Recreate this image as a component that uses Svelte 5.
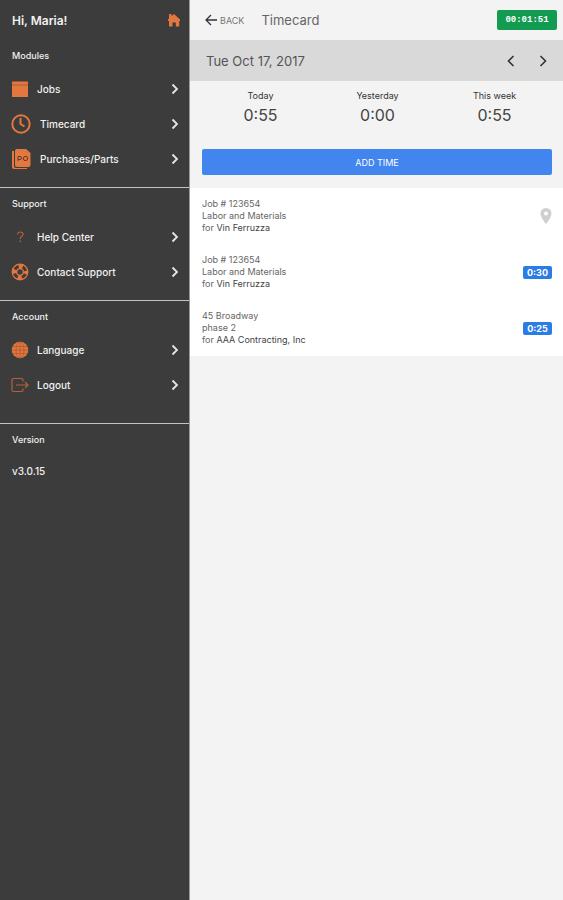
<script lang="ts">
  interface MenuItem {
    label: string;
    icon: string;
    wide?: boolean;
  }

  interface Section {
    title: string;
    items: MenuItem[];
  }

  const sections: Section[] = [
    {
      title: 'Modules',
      items: [
        { label: 'Jobs', icon: 'jobs' },
        { label: 'Timecard', icon: 'clock', wide: true },
        { label: 'Purchases/Parts', icon: 'po', wide: true },
      ],
    },
    {
      title: 'Support',
      items: [
        { label: 'Help Center', icon: 'help' },
        { label: 'Contact Support', icon: 'support' },
      ],
    },
    {
      title: 'Account',
      items: [
        { label: 'Language', icon: 'globe' },
        { label: 'Logout', icon: 'logout' },
      ],
    },
  ];

  const totals = [
    { label: 'Today', value: '0:55' },
    { label: 'Yesterday', value: '0:00' },
    { label: 'This week', value: '0:55' },
  ];

  const entries = [
    { job: 'Job # 123654', task: 'Labor and Materials', customer: 'Vin Ferruzza', time: '' },
    { job: 'Job # 123654', task: 'Labor and Materials', customer: 'Vin Ferruzza', time: '0:30' },
    { job: '45 Broadway', task: 'phase 2', customer: 'AAA Contracting, Inc', time: '0:25' },
  ];
</script>

<div class="app">
  <nav class="sidebar">
    <div class="greeting">
      <span>Hi, Maria!</span>
      <a class="home" href="#home" aria-label="Home">
        <svg width="14" height="14" viewBox="0 0 14 14" fill="#e27740">
          <path d="M2 1h2.500v2.200L7 1l6 5.500V8h-.8v5.500H8.800V9.500H5.500v4H2V8H1V6.500l1-1z" />
        </svg>
      </a>
    </div>

    {#each sections as section}
      <section class="section" class:last={section.title === 'Account'}>
        <h2>{section.title}</h2>
        {#each section.items as item}
          <a class="item" href="#{item.icon}">
            <span class="item-icon" class:wide={item.wide}>
              {#if item.icon === 'jobs'}
                <svg width="18" height="18" viewBox="0 0 18 18">
                  <path d="M1 1.500h16V17H1z" fill="#e27740" />
                  <path d="M1 5h16" stroke="#b05a33" />
                </svg>
              {:else if item.icon === 'clock'}
                <svg width="20" height="20" viewBox="0 0 20 20" fill="none" stroke="#e27740">
                  <circle cx="10" cy="10" r="8.700" stroke-width="2" />
                  <path d="M9.500 4v6l4 2.500" stroke-width="2" />
                </svg>
              {:else if item.icon === 'po'}
                <svg width="20" height="22" viewBox="0 0 20 22">
                  <path d="M3 3H1v16q0 2 2 2h13v-1H5q-2 0-2-2z" fill="#e27740" />
                  <path d="M4 3q0-2 2-2h9l4.500 4v12q0 2-2 2H6q-2 0-2-2z" fill="#e27740" />
                  <path d="M7 13V8.500h2q1.500 0 1.500 1.500T9 11.500H7" fill="none" stroke="#633c2b" />
                  <rect x="12.500" y="8.500" width="4" height="4" rx="1.500" fill="none" stroke="#633c2b" />
                </svg>
              {:else if item.icon === 'help'}
                <svg width="18" height="18" viewBox="0 0 18 18" fill="none" stroke="#b5603a">
                  <path d="M6.500 6.500q.5-2.500 3-2.500 2.500 0 2.500 2.200 0 1.300-1.500 2.300-1.200.8-1.200 2.500" stroke-width="1.200" />
                  <path d="M9.300 12.500v1.500" stroke-width="1.400" />
                </svg>
              {:else if item.icon === 'support'}
                <svg width="18" height="18" viewBox="0 0 18 18" fill="none" stroke="#e27740">
                  <circle cx="9" cy="9" r="7.800" stroke-width="1.200" />
                  <circle cx="9" cy="9" r="5.500" stroke-width="5" stroke-dasharray="4 4.640" stroke-dashoffset="2" />
                  <circle cx="9" cy="9" r="3.300" stroke-width="1.200" />
                </svg>
              {:else if item.icon === 'globe'}
                <svg width="18" height="18" viewBox="0 0 18 18" fill="none" stroke="#b05a33" stroke-width=".8">
                  <circle cx="9" cy="9" r="8.300" fill="#e27740" stroke="none" />
                  <ellipse cx="9" cy="9" rx="4" ry="8" />
                  <path d="M9 1v16M1 9h16M2 5.500h14M2 12.500h14" />
                </svg>
              {:else}
                <svg width="18" height="18" viewBox="0 0 18 18" fill="none" stroke="#b5603a" stroke-width="1.200">
                  <path d="M12 5.500V4q0-1.500-1.500-1.500H2.500Q1 2.500 1 4v10q0 1.500 1.500 1.500h8Q12 15.500 12 14v-1.500M5 9h12M14 6l3 3-3 3" />
                </svg>
              {/if}
            </span>
            <span class="item-label">{item.label}</span>
            <svg width="8" height="12" viewBox="0 0 8 12" fill="none" stroke="#e6e6e6" stroke-width="1.800">
              <path d="m1.500 1.500 4.500 4.500-4.500 4.500" />
            </svg>
          </a>
        {/each}
      </section>
    {/each}

    <section class="version">
      <h2>Version</h2>
      <p>v3.0.15</p>
    </section>
  </nav>

  <main class="content">
    <header class="header">
      <button class="back" type="button">
        <svg width="12" height="12" viewBox="0 0 12 12" fill="none" stroke="#333" stroke-width="1.300">
          <path d="M12 6H1M6 1 1 6l5 5" />
        </svg>
        BACK
      </button>
      <h1>Timecard</h1>
      <button class="timer" type="button">00:01:51</button>
    </header>

    <div class="date-bar">
      <span>Tue Oct 17, 2017</span>
      <div class="date-nav">
        <button type="button" aria-label="Previous day">
          <svg width="8" height="12" viewBox="0 0 8 12" fill="none" stroke="#333" stroke-width="1.600">
            <path d="M6.500 1 1.500 6l5 5" />
          </svg>
        </button>
        <button type="button" aria-label="Next day">
          <svg width="8" height="12" viewBox="0 0 8 12" fill="none" stroke="#333" stroke-width="1.600">
            <path d="m1.500 1 5 5-5 5" />
          </svg>
        </button>
      </div>
    </div>

    <div class="totals">
      {#each totals as total}
        <div class="total">
          <span class="total-label">{total.label}</span>
          <span class="total-value">{total.value}</span>
        </div>
      {/each}
    </div>

    <div class="actions">
      <button class="add" type="button">ADD TIME</button>
    </div>

    <ul class="entries">
      {#each entries as entry}
        <li class="entry">
          <div>
            <div>{entry.job}</div>
            <div>{entry.task}</div>
            <div>for <span class="customer">{entry.customer}</span></div>
          </div>
          {#if entry.time}
            <span class="badge">{entry.time}</span>
          {:else}
            <svg width="12" height="16" viewBox="0 0 12 16">
              <path d="M6 0a5.500 5.500 0 0 0-5.500 5.500C.5 9.500 6 16 6 16s5.500-6.500 5.500-10.500A5.500 5.500 0 0 0 6 0z" fill="#cfcfcf" />
              <circle cx="6" cy="5.500" r="2" fill="#fff" />
            </svg>
          {/if}
        </li>
      {/each}
    </ul>
  </main>
</div>

<style>
  :global(body) {
    margin: 0;
    background: #f3f3f3;
  }

  .app {
    display: grid;
    grid-template-columns: 190px 1fr;
    min-height: 100vh;
    font-family: Inter, 'Liberation Sans', sans-serif;
  }

  h1,
  h2,
  p,
  ul {
    margin: 0;
    padding: 0;
    font-weight: 400;
  }

  a {
    color: inherit;
    text-decoration: none;
  }

  button {
    border: 0;
    padding: 0;
    background: none;
    font-family: inherit;
    cursor: pointer;
  }

  svg {
    display: block;
  }

  .sidebar {
    background: #3c3c3c;
    border-right: 1px solid #999;
    color: #f0f0f0;
  }

  .greeting {
    display: flex;
    align-items: center;
    justify-content: space-between;
    height: 40px;
    padding: 0 8px 0 12px;
    font-size: 12px;
    font-weight: 600;
  }

  .section {
    padding: 8px 0 11px;
    border-bottom: 1px solid #c4c4c4;
  }

  .section.last {
    padding-bottom: 21px;
  }

  h2 {
    padding-left: 12px;
    margin-bottom: 7px;
    font-size: 9px;
    line-height: 16px;
    font-weight: 500;
  }

  .item {
    display: flex;
    align-items: center;
    height: 35px;
    padding: 0 10px 0 11px;
    font-size: 10px;
    font-weight: 500;
  }

  .item-icon {
    width: 26px;
  }

  .item-icon.wide {
    width: 29px;
  }

  .item-label {
    flex: 1;
  }

  .version {
    padding-top: 8px;
  }

  .version p {
    padding-left: 12px;
    font-size: 10px;
    line-height: 33px;
    font-weight: 500;
  }

  .content {
    background: #f3f3f3;
    color: #444;
  }

  .header {
    display: flex;
    align-items: center;
    height: 40px;
    padding: 0 6px 0 15px;
  }

  .back {
    display: flex;
    align-items: center;
    gap: 3px;
    color: #777;
    font-size: 9px;
  }

  h1 {
    flex: 1;
    margin-left: 17px;
    color: #666;
    font-size: 13px;
  }

  .timer {
    width: 60px;
    height: 20px;
    border-radius: 2px;
    background: #129b51;
    color: #fff;
    font-family: 'Liberation Mono', monospace;
    font-size: 9px;
    font-weight: 700;
  }

  .date-bar {
    display: flex;
    align-items: center;
    justify-content: space-between;
    height: 41px;
    padding: 0 16px;
    background: #d9d9d9;
    color: #555;
    font-size: 13px;
  }

  .date-nav {
    display: flex;
    gap: 24px;
  }

  .totals {
    display: grid;
    grid-template-columns: repeat(3, 1fr);
    padding: 8px 10px 0 12px;
  }

  .total {
    display: flex;
    flex-direction: column;
    align-items: center;
  }

  .total-label {
    color: #333;
    font-size: 9px;
    line-height: 14px;
  }

  .total-value {
    font-size: 16px;
    line-height: 24px;
  }

  .actions {
    padding: 22px 11px 13px 12px;
  }

  .add {
    display: block;
    width: 100%;
    height: 26px;
    border-radius: 2px;
    background: #4285ee;
    color: #fff;
    font-size: 9px;
  }

  .entries {
    list-style: none;
    background: #fff;
  }

  .entry {
    display: flex;
    align-items: center;
    justify-content: space-between;
    height: 56px;
    padding: 0 11px 0 12px;
    color: #666;
    font-size: 9px;
    line-height: 12px;
  }

  .customer {
    color: #444;
  }

  .badge {
    width: 29px;
    border-radius: 2px;
    background: #2b7de4;
    color: #fff;
    font-weight: 700;
    line-height: 13px;
    text-align: center;
  }
</style>
